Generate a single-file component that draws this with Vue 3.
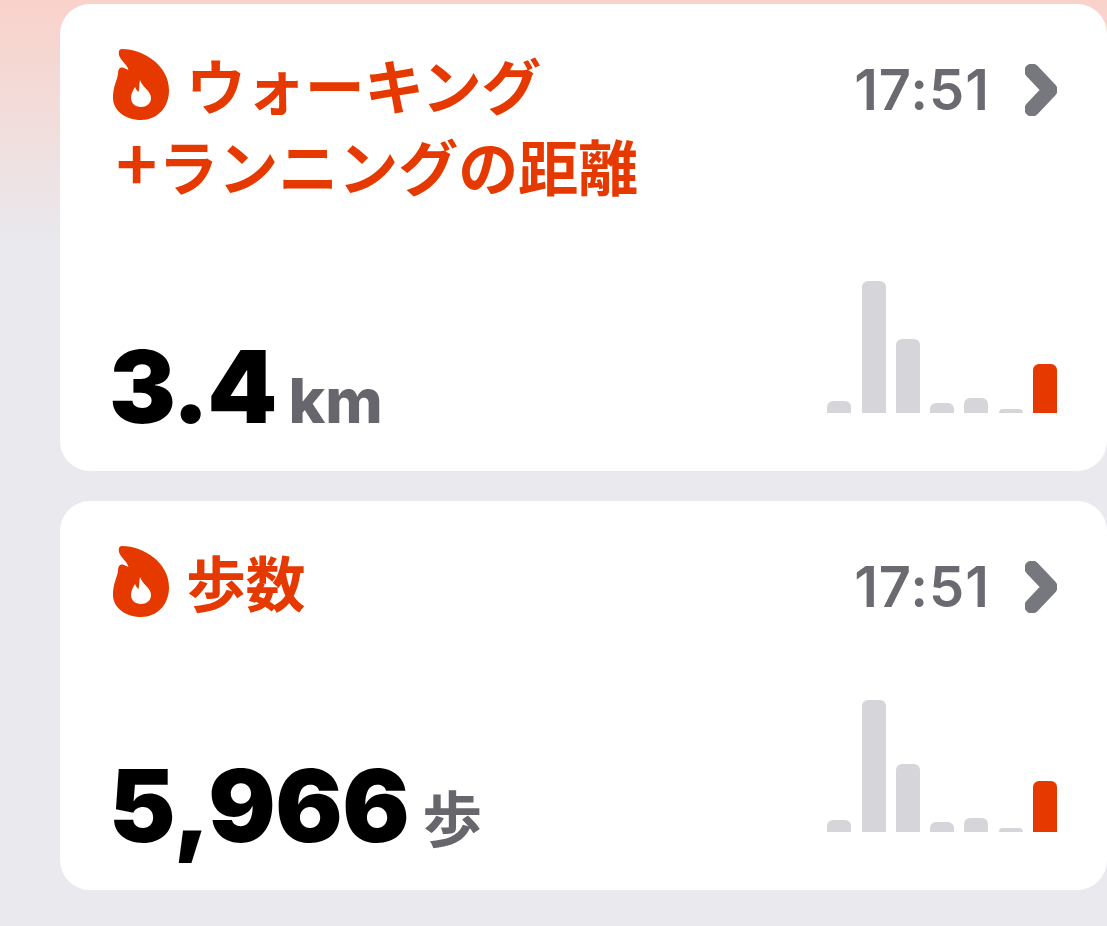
<script setup>
const cards = [
  { id: 'distance', first: 'ウォーキング', plus: '+', second: 'ランニングの距離', value: '3.4', unit: 'km', time: '17:51', bars: [12, 132, 74, 10, 15, 4, 49] },
  { id: 'steps', first: '歩数', value: '5,966', unit: '歩', time: '17:51', bars: [12, 132, 68, 10, 14, 4, 51] }
]
</script>

<template>
  <main class="page">
    <article v-for="card in cards" :key="card.id" class="card" :class="`card-${card.id}`">
      <header class="head">
        <h2 class="title">
          <span class="first">
            <svg class="flame" viewBox="0 0 58 74" aria-hidden="true">
              <path fill-rule="evenodd" d="M9 1C31 1 56 18 56 42C56 60 44 72 28 72C12 72 0 62 0 50C0 38 4 33 5 26C5 22 6 20 8 19.5C11 19 13 21 15.5 22C14 16 7 12 6 7C5.5 3 6 1.4 9 1ZM27 32C29 39 38 43 38 50C38 56 33 59 28 59C22 59 18 55 18 50C18 46 20 42 22 39C23 41 24 43 25.5 44C26.5 40 26 36 27 32Z" />
            </svg>
            <span class="first-text">{{ card.first }}</span>
          </span>
          <span v-if="card.second" class="second"><span class="plus">{{ card.plus }}</span>{{ card.second }}</span>
        </h2>
        <div class="when">
          <time class="time">{{ card.time }}</time>
          <svg class="chevron" viewBox="0 0 32 52" aria-hidden="true">
            <path d="M7 7L25 26L7 45" />
          </svg>
        </div>
      </header>
      <footer class="foot">
        <div class="reading">
          <span class="value">{{ card.value }}</span>
          <span class="unit">{{ card.unit }}</span>
        </div>
        <div class="bars">
          <i v-for="(h, i) in card.bars" :key="i" class="bar" :class="{ now: i === card.bars.length - 1 }" :style="{ height: h + 'px' }"></i>
        </div>
      </footer>
    </article>
  </main>
</template>

<style>
html, body {
  margin: 0;
  height: 100%;
  overflow: hidden;
  background: #e9e9ee;
}
</style>

<style scoped>
.page {
  box-sizing: border-box;
  height: 926px;
  padding: 4px 0 0 60px;
  display: flex;
  flex-direction: column;
  gap: 30px;
  background: linear-gradient(180deg, #f9d2ca 0, #e9e9ee 245px);
  font-family: Inter, "Noto Sans CJK JP", sans-serif;
}
.card {
  background: #fff;
  border-radius: 30px;
  padding: 41px 50px 34px 53px;
}
.head {
  display: flex;
  justify-content: space-between;
  align-items: flex-start;
}
.title {
  margin: -2px 0 2px;
  color: #e63900;
  font-family: "Noto Sans CJK JP", sans-serif;
  font-size: 60px;
  font-weight: 700;
  line-height: 81px;
  letter-spacing: 0;
}
.first, .second {
  display: block;
}
.first-text {
  letter-spacing: -0.6px;
}
.second {
  margin-left: 3px;
}
.plus {
  font-size: 70px;
  line-height: 0;
  margin-right: 1px;
}
.flame {
  display: inline-block;
  width: 58px;
  height: 74px;
  margin-right: 15px;
  vertical-align: -12px;
  fill: #e63900;
}
.when {
  display: flex;
  align-items: center;
  gap: 35px;
  height: 88px;
  margin-top: 1px;
}
.time {
  color: #6b6a71;
  font-size: 56px;
  font-weight: 600;
  letter-spacing: 1px;
  line-height: 88px;
}
.chevron {
  width: 32px;
  height: 52px;
  fill: none;
  stroke: #77777e;
  stroke-width: 15;
  stroke-linecap: round;
  stroke-linejoin: round;
}
.card-distance .foot {
  margin-top: 74px;
}
.card-steps .foot {
  margin-top: 69px;
}
.foot {
  display: flex;
  justify-content: space-between;
  align-items: flex-end;
}
.reading {
  display: flex;
  align-items: baseline;
  gap: 13px;
  margin-left: -4px;
}
.value {
  color: #000;
  font-size: 100px;
  font-weight: 900;
  line-height: 100px;
}
.card-distance .value {
  letter-spacing: -2px;
}
.card-steps .value {
  letter-spacing: -0.5px;
}
.unit {
  color: #67666d;
  font-size: 62px;
  font-weight: 800;
  line-height: 60px;
}
.card-steps .unit {
  font-size: 60px;
  font-weight: 700;
}
.bars {
  display: flex;
  align-items: flex-end;
  gap: 10.3px;
  margin-bottom: 24px;
}
.bar {
  display: block;
  width: 24px;
  background: #d6d6da;
  border-radius: 6px 6px 0 0;
}
.bar.now {
  background: #e63900;
}
</style>
